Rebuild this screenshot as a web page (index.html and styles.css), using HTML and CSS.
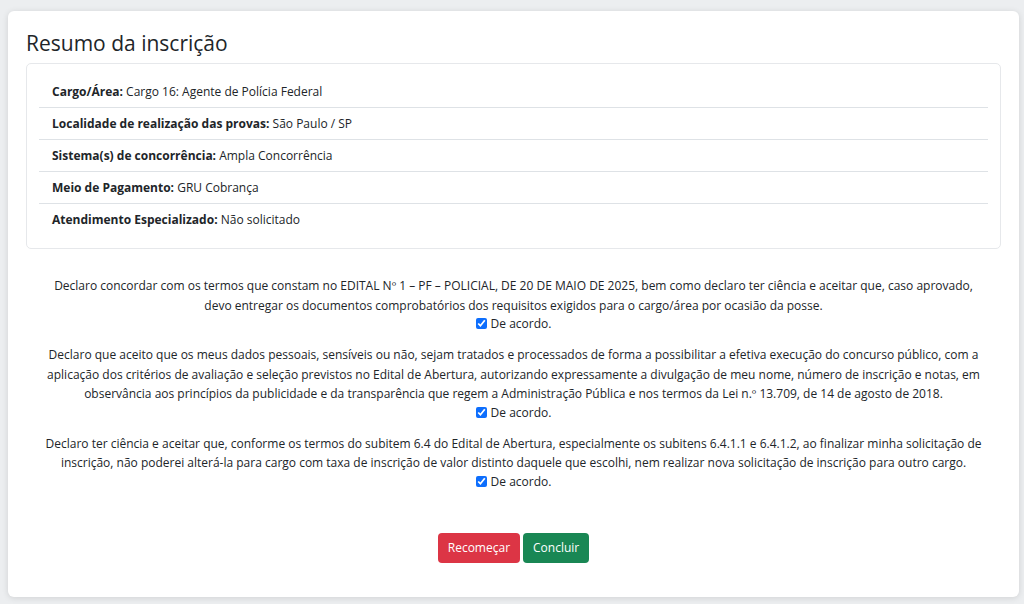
FILE: index.html
```html
<!DOCTYPE html>
<html lang="pt-BR">
<head>
  <meta charset="utf-8">
  <title>Resumo da inscrição</title>
  <link rel="stylesheet" href="styles.css">
</head>
<body>
<div class="card">
  <h4 class="title">Resumo da inscrição</h4>
  <div class="resumo">
    <ul class="lista">
      <li><b>Cargo/Área:</b> Cargo 16: Agente de Polícia Federal</li>
      <li><b>Localidade de realização das provas:</b> São Paulo / SP</li>
      <li><b>Sistema(s) de concorrência:</b> Ampla Concorrência</li>
      <li><b>Meio de Pagamento:</b> GRU Cobrança</li>
      <li><b>Atendimento Especializado:</b> Não solicitado</li>
    </ul>
  </div>

  <div class="termos">
    <div class="termo">
      <p>Declaro concordar com os termos que constam no EDITAL Nº 1 – PF – POLICIAL, DE 20 DE MAIO DE 2025, bem como declaro ter ciência e aceitar que, caso aprovado,<br>devo entregar os documentos comprobatórios dos requisitos exigidos para o cargo/área por ocasião da posse.</p>
      <label class="check"><input type="checkbox" checked> De acordo.</label>
    </div>
    <div class="termo">
      <p>Declaro que aceito que os meus dados pessoais, sensíveis ou não, sejam tratados e processados de forma a possibilitar a efetiva execução do concurso público, com a<br>aplicação dos critérios de avaliação e seleção previstos no Edital de Abertura, autorizando expressamente a divulgação de meu nome, número de inscrição e notas, em<br>observância aos princípios da publicidade e da transparência que regem a Administração Pública e nos termos da Lei n.º 13.709, de 14 de agosto de 2018.</p>
      <label class="check"><input type="checkbox" checked> De acordo.</label>
    </div>
    <div class="termo">
      <p>Declaro ter ciência e aceitar que, conforme os termos do subitem 6.4 do Edital de Abertura, especialmente os subitens 6.4.1.1 e 6.4.1.2, ao finalizar minha solicitação de<br>inscrição, não poderei alterá-la para cargo com taxa de inscrição de valor distinto daquele que escolhi, nem realizar nova solicitação de inscrição para outro cargo.</p>
      <label class="check"><input type="checkbox" checked> De acordo.</label>
    </div>
  </div>

  <div class="acoes">
    <button class="btn btn-danger">Recomeçar</button>
    <button class="btn btn-success">Concluir</button>
  </div>
</div>
</body>
</html>
```

FILE: styles.css
```css
* {
  box-sizing: border-box;
}

body {
  margin: 0;
  padding: 11px 5px 7px 8px;
  background-color: #eceef0;
  font-family: "Open Sans", "Noto Sans", sans-serif;
  font-size: 12px;
  color: #212529;
}

.card {
  background-color: #fff;
  border-radius: 6px;
  box-shadow: 0 1px 6px rgba(0, 0, 0, 0.12);
  padding: 18px 18px 34px 18px;
  height: 586px;
}

.title {
  margin: 0 0 6px 0;
  font-size: 21px;
  font-weight: 400;
  line-height: 28px;
}

.resumo {
  border: 1px solid #e6e8eb;
  border-radius: 5px;
  padding: 12px;
}

.lista {
  list-style: none;
  margin: 0;
  padding: 0;
}

.lista li {
  padding: 0 13px;
  height: 32px;
  line-height: 31px;
  border-bottom: 1px solid #dee2e6;
}

.lista li:last-child {
  border-bottom: none;
}

.termos {
  margin-top: 27px;
  text-align: center;
}

.termo {
  margin-bottom: 12px;
}

.termo p {
  margin: 0;
  line-height: 19.5px;
}

.check {
  display: inline-flex;
  align-items: center;
  gap: 4px;
  line-height: 15px;
  margin-top: 1px;
}

.check input {
  margin: 0;
  width: 11px;
  height: 11px;
  accent-color: #0d6efd;
}

.acoes {
  margin-top: 42px;
  display: flex;
  justify-content: center;
  gap: 3px;
}

.btn {
  font-family: inherit;
  font-size: 12px;
  color: #fff;
  border: none;
  border-radius: 4px;
  height: 30px;
  padding: 0 10px;
}

.btn-danger {
  background-color: #dc3545;
}

.btn-success {
  background-color: #198754;
}
```
